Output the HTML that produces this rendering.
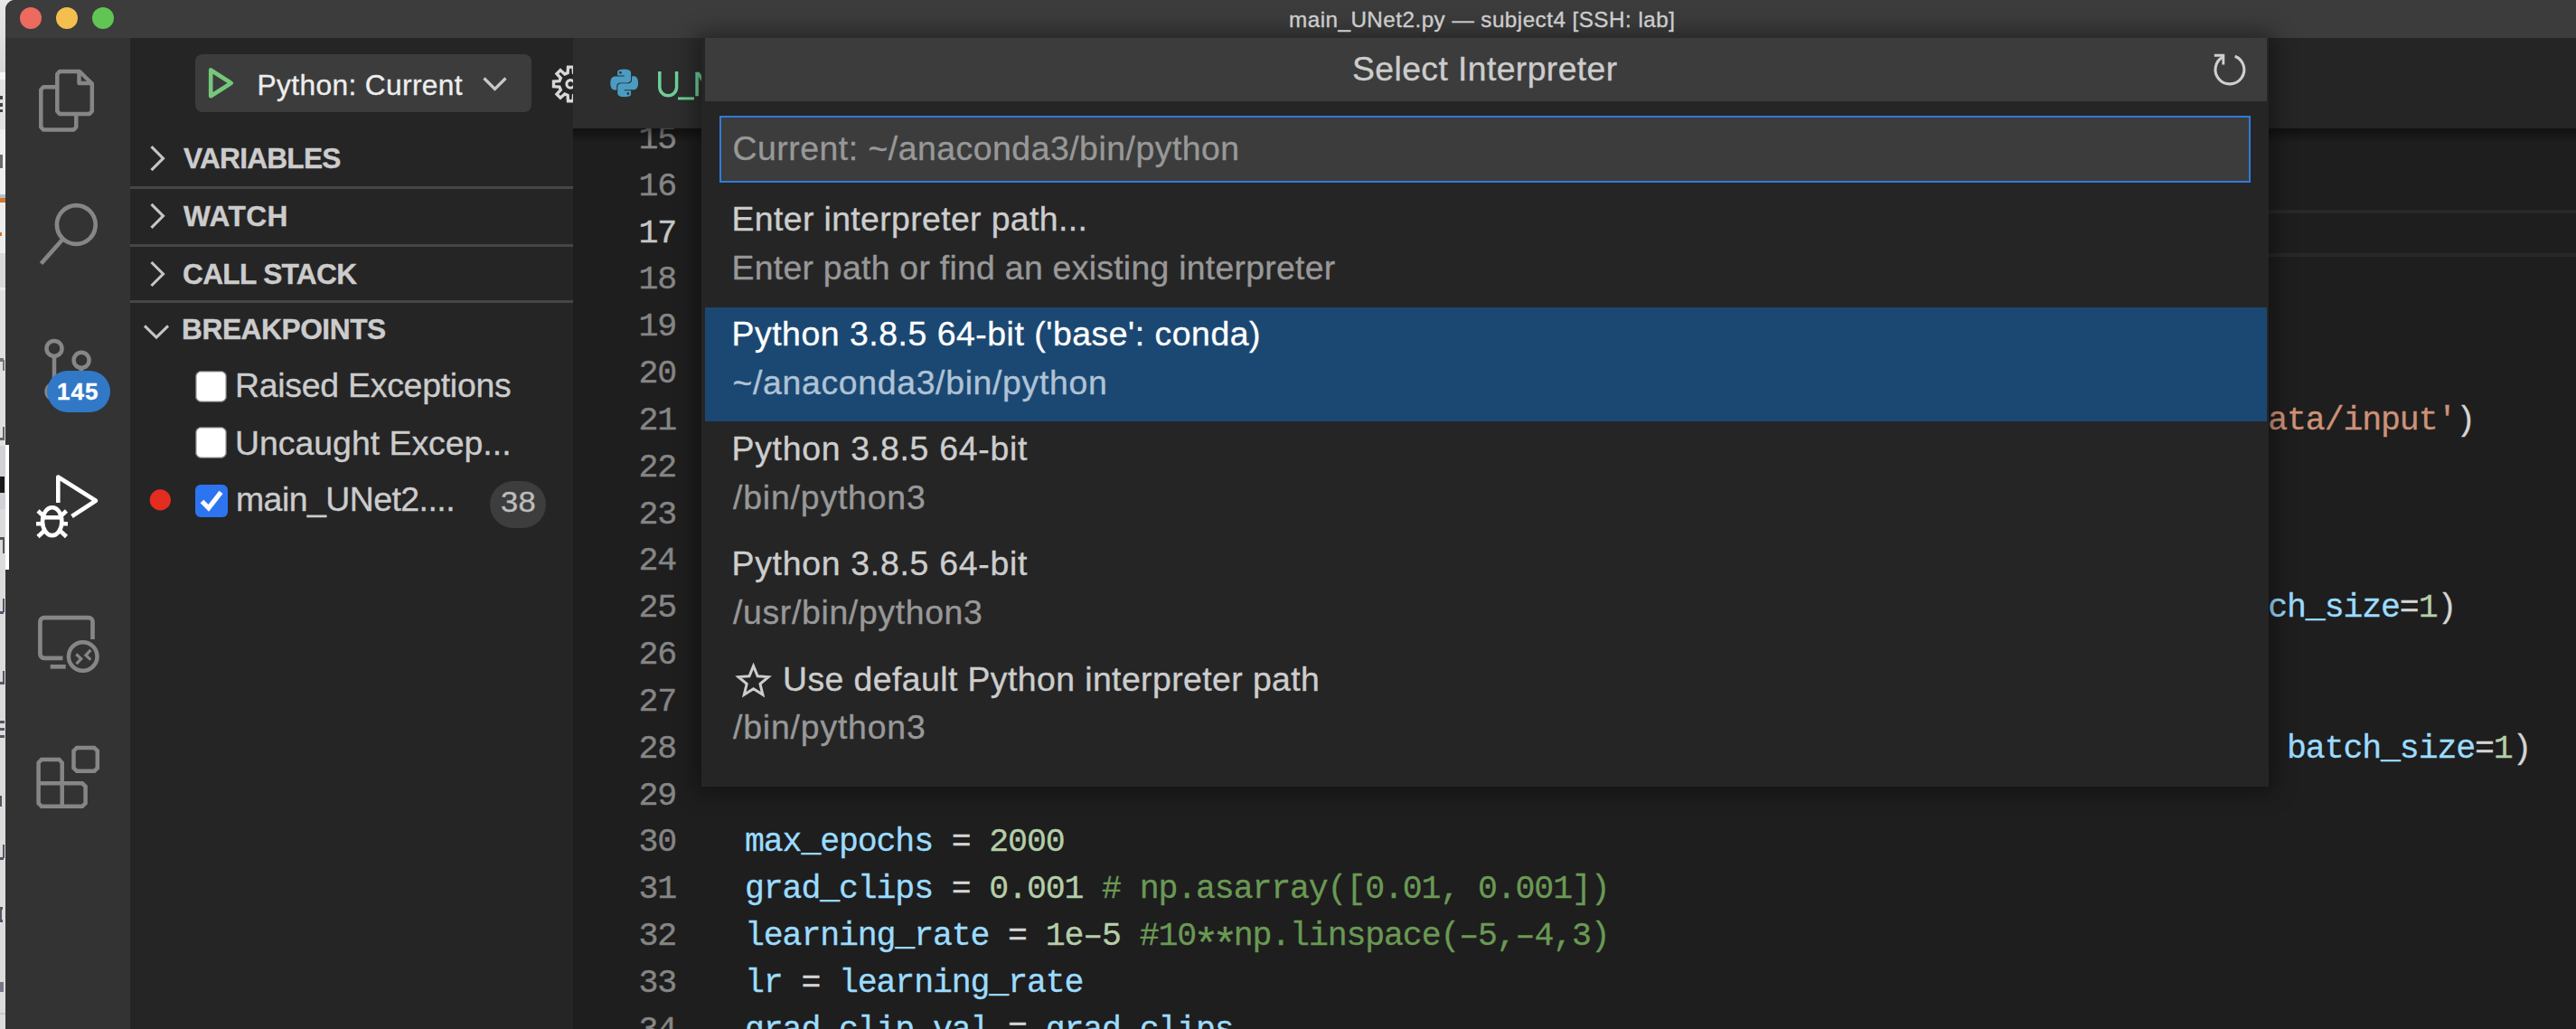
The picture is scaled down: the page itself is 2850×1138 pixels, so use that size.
<!DOCTYPE html>
<html>
<head>
<meta charset="utf-8">
<title>main_UNet2.py</title>
<style>
html,body{margin:0;padding:0;}
body{width:2850px;height:1138px;overflow:hidden;background:#e3e3e3;position:relative;font-family:"Liberation Sans",sans-serif;}
.a{position:absolute;}
#win{position:absolute;left:6px;top:0;width:2844px;height:1138px;background:#1e1e1e;border-top-left-radius:11px;overflow:hidden;}
#w{position:absolute;left:-6px;top:0;width:2850px;height:1138px;}
#titlebar{position:absolute;left:0;top:0;width:2850px;height:42px;background:#3c3c3c;}
.tl{position:absolute;top:8px;width:24px;height:24px;border-radius:50%;}
.mono{font-family:"Liberation Mono",monospace;}
.ln{position:absolute;left:634px;width:114px;text-align:right;color:#858585;font-family:"Liberation Mono",monospace;font-size:34.67px;line-height:51.84px;height:51.84px;white-space:pre;}
.cl{position:absolute;left:822.5px;color:#d4d4d4;font-family:"Liberation Mono",monospace;font-size:34.67px;line-height:51.84px;height:51.84px;white-space:pre;}
.v{color:#9cdcfe}.n{color:#b5cea8}.c{color:#6a9955}.s{color:#ce9178}
.sh{position:absolute;left:144px;width:490px;height:63.4px;}
.sh .t{position:absolute;left:59px;top:0;line-height:63.4px;font-weight:bold;font-size:31.2px;color:#c4c4c4;white-space:pre;transform-origin:0 50%;}
.sep{position:absolute;left:144px;width:490px;height:3px;background:#454545;}
.bp{position:absolute;left:262px;font-size:37.4px;color:#cccccc;line-height:63.4px;white-space:pre;transform-origin:0 50%;}
.cb{position:absolute;left:216px;width:32px;height:32px;border-radius:6px;background:#fff;border:2px solid #8a8a8a;}
.ql{position:absolute;left:811px;font-size:37.4px;line-height:54px;color:#d0d0d0;white-space:pre;transform-origin:0 50%;}
.qd{position:absolute;left:811px;font-size:37.4px;line-height:54px;color:#9d9d9d;white-space:pre;transform-origin:0 50%;}
</style>
</head>
<body>

<div class="a" style="left:0px;top:0px;width:14px;height:1138px;background:#dcdcdc;"></div>
<div class="a" style="left:0;top:0;width:14px;height:80px;background:linear-gradient(#e9e9eb,#d6d6d8);"></div>
<div class="a" style="left:0px;top:80px;width:14px;height:8px;background:#f6f6f6;"></div>
<div class="a" style="left:0px;top:88px;width:14px;height:55px;background:#e2e2e2;"></div>
<div class="a" style="left:0px;top:143px;width:14px;height:72px;background:#efefef;"></div>
<div class="a" style="left:0px;top:215px;width:14px;height:4px;background:#b9bcc4;"></div>
<div class="a" style="left:0px;top:219px;width:14px;height:5px;background:#d0762f;"></div>
<div class="a" style="left:0px;top:224px;width:14px;height:56px;background:#ededed;"></div>
<div class="a" style="left:0px;top:280px;width:14px;height:38px;background:#d9d9d9;"></div>
<div class="a" style="left:0px;top:318px;width:14px;height:3px;background:#ececec;"></div>
<div class="a" style="left:0px;top:321px;width:14px;height:172px;background:#e0e0e0;"></div>
<div class="a" style="left:0px;top:493px;width:14px;height:70px;background:#d2d2d6;"></div>
<div class="a" style="left:0px;top:106px;width:3px;height:4px;background:#444;"></div>
<div class="a" style="left:0px;top:114px;width:3px;height:4px;background:#444;"></div>
<div class="a" style="left:0px;top:121px;width:3px;height:3px;background:#444;"></div>
<div class="a" style="left:0px;top:171px;width:3px;height:15px;background:#6b6b6b;"></div>
<div class="a" style="left:0px;top:257px;width:2px;height:4px;background:#d0762f;"></div>
<div class="a" style="left:0px;top:396px;width:4px;height:4px;background:#777;"></div>
<div class="a" style="left:3px;top:398px;width:2px;height:12px;background:#777;"></div>
<div class="a" style="left:0px;top:484px;width:5px;height:3px;background:#666;"></div>
<div class="a" style="left:3px;top:472px;width:2px;height:14px;background:#666;"></div>
<div class="a" style="left:0px;top:527px;width:5px;height:18px;background:#1a1a1a;"></div>
<div class="a" style="left:0px;top:594px;width:5px;height:3px;background:#555;"></div>
<div class="a" style="left:3px;top:596px;width:2px;height:16px;background:#555;"></div>
<div class="a" style="left:0px;top:676px;width:4px;height:3px;background:#556;"></div>
<div class="a" style="left:3px;top:662px;width:2px;height:15px;background:#556;"></div>
<div class="a" style="left:0px;top:754px;width:5px;height:3px;background:#556;"></div>
<div class="a" style="left:3px;top:742px;width:2px;height:13px;background:#556;"></div>
<div class="a" style="left:0px;top:797px;width:5px;height:3px;background:#556;"></div>
<div class="a" style="left:0px;top:805px;width:5px;height:3px;background:#556;"></div>
<div class="a" style="left:0px;top:813px;width:5px;height:3px;background:#556;"></div>
<div class="a" style="left:0px;top:880px;width:2px;height:12px;background:#556;"></div>
<div class="a" style="left:0px;top:948px;width:4px;height:3px;background:#556;"></div>
<div class="a" style="left:3px;top:934px;width:2px;height:15px;background:#556;"></div>
<div class="a" style="left:0px;top:1003px;width:3px;height:3px;background:#556;"></div>
<div class="a" style="left:0px;top:1017px;width:3px;height:3px;background:#556;"></div>
<div class="a" style="left:0px;top:1006px;width:2px;height:11px;background:#556;"></div>
<div class="a" style="left:0px;top:1086px;width:4px;height:11px;background:#778;"></div>
<div class="a" style="left:0px;top:1120px;width:14px;height:2px;background:#c8c8c8;"></div>
<div id="win"><div id="w">
<div class="a" style="left:6px;top:42px;width:138px;height:1096px;background:#333333;"></div>
<div class="a" style="left:6px;top:491.5px;width:4px;height:138px;background:#ffffff;"></div>
<svg class="a" style="left:0;top:0;" width="2850" height="1138" viewBox="0 0 2850 1138" fill="none"><g stroke="#868686" stroke-width="4.5" stroke-linejoin="round" fill="none">
<path d="M63.3 82 L66 79 L88 79 L101.8 92.5 L101.8 123 L99 126 L66 126 L63.3 123 Z"/>
<path d="M87.5 79.5 L87.5 92 L101.5 92"/>
<path d="M63 96.3 L48 96.3 L45.3 99.3 L45.3 140.5 L48 143.5 L81.5 143.5 L84.3 140.5 L84.3 127"/>
</g>
<g stroke="#868686" stroke-width="4.7" fill="none">
<circle cx="84.3" cy="248.5" r="21.4"/>
<path d="M69.5 264.5 L45.5 291.5"/>
</g>
<g stroke="#868686" stroke-width="4.5" fill="none">
<circle cx="60" cy="385.4" r="8.5"/>
<circle cx="90.1" cy="398.3" r="8.5"/>
<circle cx="60" cy="433" r="8.5"/>
<path d="M60 394 L60 424.5"/>
<path d="M90.1 407 C90.1 420 75 418 62 428"/>
</g>
<g stroke="#ffffff" stroke-width="4.6" fill="none" stroke-linejoin="round">
<path d="M64.3 556 L64.3 527.5 L106 553.8 L79.5 571"/>
<ellipse cx="57.7" cy="576.7" rx="10.7" ry="15.4"/>
<path d="M47.5 572.3 L68 572.3"/>
<path d="M40 579.2 L47 579.2 M68.5 579.2 L75 579.2"/>
<path d="M42 565 L48 570.5 M73.5 565 L67.5 570.5"/>
<path d="M42 593.5 L49 587 M73.5 593.5 L66.5 587"/>
</g>
<g stroke="#868686" stroke-width="4.7" fill="none" stroke-linejoin="round">
<path d="M102.5 707 V687.7 a4.5 4.5 0 0 0 -4.5 -4.5 H48.9 a4.5 4.5 0 0 0 -4.5 4.5 V723.3 a4.5 4.5 0 0 0 4.5 4.5 H69.5"/>
<path d="M55.7 737.3 L72.7 737.3"/>
<circle cx="91.7" cy="726" r="15.8" stroke-width="4.5"/>
<path d="M84.3 723.5 L89.8 728.5 L84.5 734.2" stroke-width="3.2" stroke-linejoin="miter"/>
<path d="M100.3 718.9 L95 724.6 L100.3 729.6" stroke-width="3.2" stroke-linejoin="miter"/>
</g>
<g stroke="#868686" stroke-width="4.5" fill="none" stroke-linejoin="miter">
<path d="M42.6 843.5 L46 840 L65.5 840 L68.7 843.5 L68.7 866.3 L91 866.3 L94.6 869.8 L94.6 888.3 L91 891.8 L46 891.8 L42.6 888.3 Z"/>
<path d="M42.6 866.3 L68.7 866.3 L68.7 891.8"/>
<path d="M81.5 830.5 L85 827 L104.3 827 L107.8 830.5 L107.8 849.3 L104.3 852.8 L85 852.8 L81.5 849.3 Z"/>
</g></svg>
<div class="a" style="left:52px;top:410px;width:70px;height:46px;border-radius:23px;background:#3178c6;"></div>
<div id="badge" class="a" style="left:63.00px;top:418.67px;height:29.04px;line-height:29.04px;font-family:'Liberation Sans',sans-serif;font-size:26px;font-weight:bold;color:#ffffff;white-space:pre;letter-spacing:1.000px;-webkit-text-stroke:0.35px;">145</div>
<div class="a" style="left:144px;top:42px;width:490px;height:1096px;background:#252526;"></div>
<div class="a" style="left:216px;top:59.6px;width:372px;height:64.4px;border-radius:8px;background:#3c3c3c;"></div>
<svg class="a" style="left:0;top:0;" width="2850" height="1138" viewBox="0 0 2850 1138" fill="none"><path d="M233.2 77.5 L233.2 106.3 L255.7 91.9 Z" stroke="#75c77b" stroke-width="4.6" stroke-linejoin="round"/>
<path d="M535.5 86.5 L547.5 98.5 L559.5 86.5" stroke="#c8c8c8" stroke-width="3.2"/>
<g stroke="#d8d8d8" stroke-width="3.4" fill="none" stroke-linejoin="miter">
<path d="M650.1 90.1 L650.1 95.7 L643.7 96.1 L642.3 99.4 L646.6 104.2 L642.6 108.2 L637.8 103.9 L634.5 105.3 L634.1 111.7 L628.5 111.7 L628.1 105.3 L624.8 103.9 L620.0 108.2 L616.0 104.2 L620.3 99.4 L618.9 96.1 L612.5 95.7 L612.5 90.1 L618.9 89.7 L620.3 86.4 L616.0 81.6 L620.0 77.6 L624.8 81.9 L628.1 80.5 L628.5 74.1 L634.1 74.1 L634.5 80.5 L637.8 81.9 L642.6 77.6 L646.6 81.6 L642.3 86.4 L643.7 89.7 Z"/>
<circle cx="631.2" cy="92.9" r="4.3" stroke-width="3.1"/>
</g></svg>
<div id="pycur" class="a" style="left:284.50px;top:77.31px;height:35.41px;line-height:35.41px;font-family:'Liberation Sans',sans-serif;font-size:31.7px;font-weight:normal;color:#eeeeee;white-space:pre;letter-spacing:0.371px;-webkit-text-stroke:0.35px;">Python: Current</div>
<div id="sh0" class="a" style="left:203.00px;top:157.51px;height:35.41px;line-height:35.41px;font-family:'Liberation Sans',sans-serif;font-size:31.7px;font-weight:bold;color:#cccccc;white-space:pre;letter-spacing:-0.800px;-webkit-text-stroke:0.35px;">VARIABLES</div>
<div id="sh1" class="a" style="left:203.00px;top:221.51px;height:35.41px;line-height:35.41px;font-family:'Liberation Sans',sans-serif;font-size:31.7px;font-weight:bold;color:#cccccc;white-space:pre;letter-spacing:0.400px;-webkit-text-stroke:0.35px;">WATCH</div>
<div id="sh2" class="a" style="left:202.00px;top:285.71px;height:35.41px;line-height:35.41px;font-family:'Liberation Sans',sans-serif;font-size:31.7px;font-weight:bold;color:#cccccc;white-space:pre;letter-spacing:-0.711px;-webkit-text-stroke:0.35px;">CALL STACK</div>
<div id="sh3" class="a" style="left:201.00px;top:347.11px;height:35.41px;line-height:35.41px;font-family:'Liberation Sans',sans-serif;font-size:31.7px;font-weight:bold;color:#cccccc;white-space:pre;letter-spacing:-0.440px;-webkit-text-stroke:0.35px;">BREAKPOINTS</div>
<div class="a" style="left:144px;top:206.3px;width:490px;height:2.8px;background:#464647;"></div>
<div class="a" style="left:144px;top:270.3px;width:490px;height:2.8px;background:#464647;"></div>
<div class="a" style="left:144px;top:332.3px;width:490px;height:2.8px;background:#464647;"></div>
<svg class="a" style="left:0;top:0;" width="2850" height="1138" viewBox="0 0 2850 1138" fill="none"><path d="M167.5 162.2 L180.5 175.2 L167.5 188.2" stroke="#c5c5c5" stroke-width="3.1" fill="none"/><path d="M167.5 225.8 L180.5 238.8 L167.5 251.8" stroke="#c5c5c5" stroke-width="3.1" fill="none"/><path d="M167.5 290 L180.5 303 L167.5 316" stroke="#c5c5c5" stroke-width="3.1" fill="none"/><path d="M160 360.3 L173 373 L186 360.3" stroke="#c5c5c5" stroke-width="3.1" fill="none"/></svg>
<div class="a" style="left:216.4px;top:410px;width:32.6px;height:32.8px;border-radius:6.5px;background:#ffffff;border:1.5px solid #6f6f6f;box-shadow:inset 0 0 0 0.6px #9a9a9a;"></div>
<div class="a" style="left:216.4px;top:472px;width:32.6px;height:32.8px;border-radius:6.5px;background:#ffffff;border:1.5px solid #6f6f6f;box-shadow:inset 0 0 0 0.6px #9a9a9a;"></div>
<div class="a" style="left:216.4px;top:536px;width:35.6px;height:35.6px;border-radius:6px;background:#2d74f0;"></div>
<svg class="a" style="left:0;top:0;" width="2850" height="1138" viewBox="0 0 2850 1138" fill="none"><path d="M223.5 554.5 L230.8 561.8 L244.5 544.3" stroke="#ffffff" stroke-width="5.2" fill="none"/><circle cx="177.3" cy="552.9" r="11.6" fill="#e42d20"/></svg>
<div id="bp0" class="a" style="left:260.00px;top:405.75px;height:41.78px;line-height:41.78px;font-family:'Liberation Sans',sans-serif;font-size:37.4px;font-weight:normal;color:#cccccc;white-space:pre;letter-spacing:-0.250px;-webkit-text-stroke:0.35px;">Raised Exceptions</div>
<div id="bp1" class="a" style="left:260.00px;top:469.65px;height:41.78px;line-height:41.78px;font-family:'Liberation Sans',sans-serif;font-size:37.4px;font-weight:normal;color:#cccccc;white-space:pre;letter-spacing:0.000px;-webkit-text-stroke:0.35px;">Uncaught Excep...</div>
<div id="bp2" class="a" style="left:261.00px;top:531.65px;height:41.78px;line-height:41.78px;font-family:'Liberation Sans',sans-serif;font-size:37.4px;font-weight:normal;color:#cccccc;white-space:pre;letter-spacing:-0.523px;-webkit-text-stroke:0.35px;">main_UNet2....</div>
<div class="a" style="left:542px;top:531.8px;width:62.2px;height:52.1px;border-radius:26px;background:#3d3d3d;"></div>
<div id="b38" class="a" style="left:553.60px;top:537.81px;height:35.41px;line-height:35.41px;font-family:'Liberation Sans',sans-serif;font-size:31.7px;font-weight:normal;color:#bdbdbd;white-space:pre;letter-spacing:0.200px;transform:scaleX(1.09);transform-origin:0 0;-webkit-text-stroke:0.35px;">38</div>
<div class="a" style="left:634px;top:42px;width:2216px;height:1096px;background:#1e1e1e;"></div>
<div class="a" style="left:822px;top:231.8px;width:2028px;height:4.4px;background:#282828;"></div>
<div class="a" style="left:822px;top:279.8px;width:2028px;height:4.4px;background:#282828;"></div>
<div id="ln15" class="a" style="left:706.50px;top:133.83px;height:41.47px;line-height:41.47px;font-family:'Liberation Mono',monospace;font-size:36.6px;font-weight:normal;color:#858585;white-space:pre;letter-spacing:0.000px;letter-spacing:-1.157px;-webkit-text-stroke:0.4px #858585;">15</div>
<div id="ln16" class="a" style="left:706.50px;top:185.67px;height:41.47px;line-height:41.47px;font-family:'Liberation Mono',monospace;font-size:36.6px;font-weight:normal;color:#858585;white-space:pre;letter-spacing:0.000px;letter-spacing:-1.157px;-webkit-text-stroke:0.4px #858585;">16</div>
<div id="ln17" class="a" style="left:706.50px;top:237.51px;height:41.47px;line-height:41.47px;font-family:'Liberation Mono',monospace;font-size:36.6px;font-weight:normal;color:#c6c6c6;white-space:pre;letter-spacing:0.000px;letter-spacing:-1.157px;-webkit-text-stroke:0.4px #c6c6c6;">17</div>
<div id="ln18" class="a" style="left:706.50px;top:289.35px;height:41.47px;line-height:41.47px;font-family:'Liberation Mono',monospace;font-size:36.6px;font-weight:normal;color:#858585;white-space:pre;letter-spacing:0.000px;letter-spacing:-1.157px;-webkit-text-stroke:0.4px #858585;">18</div>
<div id="ln19" class="a" style="left:706.50px;top:341.19px;height:41.47px;line-height:41.47px;font-family:'Liberation Mono',monospace;font-size:36.6px;font-weight:normal;color:#858585;white-space:pre;letter-spacing:0.000px;letter-spacing:-1.157px;-webkit-text-stroke:0.4px #858585;">19</div>
<div id="ln20" class="a" style="left:706.50px;top:393.03px;height:41.47px;line-height:41.47px;font-family:'Liberation Mono',monospace;font-size:36.6px;font-weight:normal;color:#858585;white-space:pre;letter-spacing:0.000px;letter-spacing:-1.157px;-webkit-text-stroke:0.4px #858585;">20</div>
<div id="ln21" class="a" style="left:706.50px;top:444.87px;height:41.47px;line-height:41.47px;font-family:'Liberation Mono',monospace;font-size:36.6px;font-weight:normal;color:#858585;white-space:pre;letter-spacing:0.000px;letter-spacing:-1.157px;-webkit-text-stroke:0.4px #858585;">21</div>
<div id="ln22" class="a" style="left:706.50px;top:496.71px;height:41.47px;line-height:41.47px;font-family:'Liberation Mono',monospace;font-size:36.6px;font-weight:normal;color:#858585;white-space:pre;letter-spacing:0.000px;letter-spacing:-1.157px;-webkit-text-stroke:0.4px #858585;">22</div>
<div id="ln23" class="a" style="left:706.50px;top:548.55px;height:41.47px;line-height:41.47px;font-family:'Liberation Mono',monospace;font-size:36.6px;font-weight:normal;color:#858585;white-space:pre;letter-spacing:0.000px;letter-spacing:-1.157px;-webkit-text-stroke:0.4px #858585;">23</div>
<div id="ln24" class="a" style="left:706.50px;top:600.39px;height:41.47px;line-height:41.47px;font-family:'Liberation Mono',monospace;font-size:36.6px;font-weight:normal;color:#858585;white-space:pre;letter-spacing:0.000px;letter-spacing:-1.157px;-webkit-text-stroke:0.4px #858585;">24</div>
<div id="ln25" class="a" style="left:706.50px;top:652.23px;height:41.47px;line-height:41.47px;font-family:'Liberation Mono',monospace;font-size:36.6px;font-weight:normal;color:#858585;white-space:pre;letter-spacing:0.000px;letter-spacing:-1.157px;-webkit-text-stroke:0.4px #858585;">25</div>
<div id="ln26" class="a" style="left:706.50px;top:704.07px;height:41.47px;line-height:41.47px;font-family:'Liberation Mono',monospace;font-size:36.6px;font-weight:normal;color:#858585;white-space:pre;letter-spacing:0.000px;letter-spacing:-1.157px;-webkit-text-stroke:0.4px #858585;">26</div>
<div id="ln27" class="a" style="left:706.50px;top:755.91px;height:41.47px;line-height:41.47px;font-family:'Liberation Mono',monospace;font-size:36.6px;font-weight:normal;color:#858585;white-space:pre;letter-spacing:0.000px;letter-spacing:-1.157px;-webkit-text-stroke:0.4px #858585;">27</div>
<div id="ln28" class="a" style="left:706.50px;top:807.75px;height:41.47px;line-height:41.47px;font-family:'Liberation Mono',monospace;font-size:36.6px;font-weight:normal;color:#858585;white-space:pre;letter-spacing:0.000px;letter-spacing:-1.157px;-webkit-text-stroke:0.4px #858585;">28</div>
<div id="ln29" class="a" style="left:706.50px;top:859.59px;height:41.47px;line-height:41.47px;font-family:'Liberation Mono',monospace;font-size:36.6px;font-weight:normal;color:#858585;white-space:pre;letter-spacing:0.000px;letter-spacing:-1.157px;-webkit-text-stroke:0.4px #858585;">29</div>
<div id="ln30" class="a" style="left:706.50px;top:911.43px;height:41.47px;line-height:41.47px;font-family:'Liberation Mono',monospace;font-size:36.6px;font-weight:normal;color:#858585;white-space:pre;letter-spacing:0.000px;letter-spacing:-1.157px;-webkit-text-stroke:0.4px #858585;">30</div>
<div id="ln31" class="a" style="left:706.50px;top:963.27px;height:41.47px;line-height:41.47px;font-family:'Liberation Mono',monospace;font-size:36.6px;font-weight:normal;color:#858585;white-space:pre;letter-spacing:0.000px;letter-spacing:-1.157px;-webkit-text-stroke:0.4px #858585;">31</div>
<div id="ln32" class="a" style="left:706.50px;top:1015.11px;height:41.47px;line-height:41.47px;font-family:'Liberation Mono',monospace;font-size:36.6px;font-weight:normal;color:#858585;white-space:pre;letter-spacing:0.000px;letter-spacing:-1.157px;-webkit-text-stroke:0.4px #858585;">32</div>
<div id="ln33" class="a" style="left:706.50px;top:1066.95px;height:41.47px;line-height:41.47px;font-family:'Liberation Mono',monospace;font-size:36.6px;font-weight:normal;color:#858585;white-space:pre;letter-spacing:0.000px;letter-spacing:-1.157px;-webkit-text-stroke:0.4px #858585;">33</div>
<div id="ln34" class="a" style="left:706.50px;top:1118.79px;height:41.47px;line-height:41.47px;font-family:'Liberation Mono',monospace;font-size:36.6px;font-weight:normal;color:#858585;white-space:pre;letter-spacing:0.000px;letter-spacing:-1.157px;-webkit-text-stroke:0.4px #858585;">34</div>
<div id="c21" class="a" style="left:2509.29px;top:444.87px;height:41.47px;line-height:41.47px;font-family:'Liberation Mono',monospace;font-size:36.6px;font-weight:normal;color:#d4d4d4;white-space:pre;letter-spacing:0.000px;letter-spacing:-1.157px;-webkit-text-stroke:0.3px;"><span class="s">ata/input'</span>)</div>
<div id="c25" class="a" style="left:2509.29px;top:652.23px;height:41.47px;line-height:41.47px;font-family:'Liberation Mono',monospace;font-size:36.6px;font-weight:normal;color:#d4d4d4;white-space:pre;letter-spacing:0.000px;letter-spacing:-1.157px;-webkit-text-stroke:0.3px;"><span class="v">ch_size</span>=<span class="n">1</span>)</div>
<div id="c28" class="a" style="left:2530.09px;top:807.75px;height:41.47px;line-height:41.47px;font-family:'Liberation Mono',monospace;font-size:36.6px;font-weight:normal;color:#d4d4d4;white-space:pre;letter-spacing:0.000px;letter-spacing:-1.157px;-webkit-text-stroke:0.3px;"><span class="v">batch_size</span>=<span class="n">1</span>)</div>
<div id="c30" class="a" style="left:824.00px;top:911.43px;height:41.47px;line-height:41.47px;font-family:'Liberation Mono',monospace;font-size:36.6px;font-weight:normal;color:#d4d4d4;white-space:pre;letter-spacing:0.000px;letter-spacing:-1.157px;-webkit-text-stroke:0.3px;"><span class="v">max_epochs</span> = <span class="n">2000</span></div>
<div id="c31" class="a" style="left:824.00px;top:963.27px;height:41.47px;line-height:41.47px;font-family:'Liberation Mono',monospace;font-size:36.6px;font-weight:normal;color:#d4d4d4;white-space:pre;letter-spacing:0.000px;letter-spacing:-1.157px;-webkit-text-stroke:0.3px;"><span class="v">grad_clips</span> = <span class="n">0.001</span> <span class="c"># np.asarray([0.01, 0.001])</span></div>
<div id="c32" class="a" style="left:824.00px;top:1015.11px;height:41.47px;line-height:41.47px;font-family:'Liberation Mono',monospace;font-size:36.6px;font-weight:normal;color:#d4d4d4;white-space:pre;letter-spacing:0.000px;letter-spacing:-1.157px;-webkit-text-stroke:0.3px;"><span class="v">learning_rate</span> = <span class="n">1e–5</span> <span class="c">#10<span style="position:relative;top:15px;left:-3px;font-size:48px;line-height:0;letter-spacing:-8px;margin-right:0px;">**</span>np.linspace(–5,–4,3)</span></div>
<div id="c33" class="a" style="left:824.00px;top:1066.95px;height:41.47px;line-height:41.47px;font-family:'Liberation Mono',monospace;font-size:36.6px;font-weight:normal;color:#d4d4d4;white-space:pre;letter-spacing:0.000px;letter-spacing:-1.157px;-webkit-text-stroke:0.3px;"><span class="v">lr</span> = <span class="v">learning_rate</span></div>
<div id="c34" class="a" style="left:824.00px;top:1118.79px;height:41.47px;line-height:41.47px;font-family:'Liberation Mono',monospace;font-size:36.6px;font-weight:normal;color:#d4d4d4;white-space:pre;letter-spacing:0.000px;letter-spacing:-1.157px;-webkit-text-stroke:0.3px;"><span class="v">grad_clip_val</span> = <span class="v">grad_clips</span></div>
<div class="a" style="left:634px;top:42px;width:2216px;height:100px;background:#252526;"></div>
<div class="a" style="left:634px;top:42px;width:160px;height:100px;background:#2d2d2d;"></div>
<div class="a" style="left:634px;top:142px;width:2216px;height:16px;background:linear-gradient(rgba(0,0,0,0.45),rgba(0,0,0,0));"></div>
<svg class="a" style="left:0;top:0;" width="2850" height="1138" viewBox="0 0 2850 1138" fill="none"><path d="M729.8 79 L729.8 96.3 A9.4 9.4 0 0 0 748.6 96.3 L748.6 79" stroke="#6fcf97" stroke-width="3.5" fill="none"/><rect x="750" y="107.4" width="18" height="3" fill="#6fcf97"/></svg>
<div id="tab" class="a" style="left:766.60px;top:72.95px;height:41.78px;line-height:41.78px;font-family:'Liberation Sans',sans-serif;font-size:37.4px;font-weight:normal;color:#6fcf97;white-space:pre;letter-spacing:0.000px;-webkit-text-stroke:0.35px;">Net.py</div>
<svg class="a" style="left:0;top:0;" width="2850" height="1138" viewBox="0 0 2850 1138" fill="none"><path transform="translate(675.4,76.6) scale(1.272)" fill="#4b9cc3" fill-rule="evenodd" d="M14.25.18l.9.2.73.26.59.3.45.32.34.34.25.34.16.33.1.3.04.26.02.2-.01.13V8.5l-.05.63-.13.55-.21.46-.26.38-.3.31-.33.25-.35.19-.35.14-.33.1-.3.07-.26.04-.21.02H8.77l-.69.05-.59.14-.5.22-.41.27-.33.32-.27.35-.2.36-.15.37-.1.35-.07.32-.04.27-.02.21v3.06H3.17l-.21-.03-.28-.07-.32-.12-.35-.18-.36-.26-.36-.36-.35-.46-.32-.59-.28-.73-.21-.88-.14-1.05-.05-1.23.06-1.22.16-1.04.24-.87.32-.71.36-.57.4-.44.42-.33.42-.24.4-.16.36-.1.32-.05.24-.01h.16l.06.01h8.16v-.83H6.18l-.01-2.75-.02-.37.05-.34.11-.31.17-.28.25-.26.31-.23.38-.2.44-.18.51-.15.58-.12.64-.1.71-.06.77-.04.84-.02 1.27.05zm-6.3 1.98l-.23.33-.08.41.08.41.23.34.33.22.41.09.41-.09.33-.22.23-.34.08-.41-.08-.41-.23-.33-.33-.22-.41-.09-.41.09zm13.09 3.95l.28.06.32.12.35.18.36.27.36.35.35.47.32.59.28.73.21.88.14 1.04.05 1.23-.06 1.23-.16 1.04-.24.86-.32.71-.36.57-.4.45-.42.33-.42.24-.4.16-.36.09-.32.05-.24.02-.16-.01h-8.22v.82h5.84l.01 2.76.02.36-.05.34-.11.31-.17.29-.25.25-.31.24-.38.2-.44.17-.51.15-.58.13-.64.09-.71.07-.77.04-.84.01-1.27-.04-1.07-.14-.9-.2-.73-.25-.59-.3-.45-.33-.34-.34-.25-.34-.16-.33-.1-.3-.04-.25-.02-.2.01-.13v-5.34l.05-.64.13-.54.21-.46.26-.38.3-.32.33-.24.35-.2.35-.14.33-.1.3-.06.26-.04.21-.02.13-.01h5.84l.69-.05.59-.14.5-.21.41-.28.33-.32.27-.35.2-.36.15-.36.1-.35.07-.32.04-.28.02-.21V6.07h2.09l.14.01zm-6.47 14.25l-.23.33-.08.41.08.41.23.33.33.23.41.08.41-.08.33-.23.23-.33.08-.41-.08-.41-.23-.33-.33-.23-.41-.08-.41.08z"/></svg>
<div id="titlebar"></div>
<div class="a" style="left:776px;top:42px;width:1734px;height:828px;background:#252526;box-shadow:0 0 23px 5.8px rgba(0,0,0,0.40);"></div>
<div class="a" style="left:780px;top:42px;width:1728px;height:70px;background:#3c3c3c;"></div>
<div id="qt" class="a" style="left:1496.00px;top:56.45px;height:41.78px;line-height:41.78px;font-family:'Liberation Sans',sans-serif;font-size:37.4px;font-weight:normal;color:#cccccc;white-space:pre;letter-spacing:0.376px;-webkit-text-stroke:0.35px;">Select Interpreter</div>
<svg class="a" style="left:0;top:0;" width="2850" height="1138" viewBox="0 0 2850 1138" fill="none"><path d="M2472.7 62.2 A15.9 15.9 0 1 1 2459.6 62.9" stroke="#cfcfcf" stroke-width="3.1" fill="none"/><path d="M2449.8 61.3 L2459.8 61.3 L2459.8 71.4" stroke="#cfcfcf" stroke-width="2.9" fill="none"/></svg>
<div class="a" style="left:796px;top:128px;width:1690px;height:70px;background:#3c3c3c;border:2px solid #2f7bd8;"></div>
<div id="qi" class="a" style="left:810.50px;top:144.15px;height:41.78px;line-height:41.78px;font-family:'Liberation Sans',sans-serif;font-size:37.4px;font-weight:normal;color:#989898;white-space:pre;letter-spacing:0.500px;-webkit-text-stroke:0.35px;">Current: ~/anaconda3/bin/python</div>
<div class="a" style="left:780px;top:339.8px;width:1728px;height:126.4px;background:#1b4872;"></div>
<div id="ql0" class="a" style="left:809.50px;top:222.15px;height:41.78px;line-height:41.78px;font-family:'Liberation Sans',sans-serif;font-size:37.4px;font-weight:normal;color:#cdcdcd;white-space:pre;letter-spacing:0.367px;-webkit-text-stroke:0.35px;">Enter interpreter path...</div>
<div id="qd0" class="a" style="left:809.50px;top:275.75px;height:41.78px;line-height:41.78px;font-family:'Liberation Sans',sans-serif;font-size:37.4px;font-weight:normal;color:#989898;white-space:pre;letter-spacing:0.268px;-webkit-text-stroke:0.35px;">Enter path or find an existing interpreter</div>
<div id="ql1" class="a" style="left:809.50px;top:349.25px;height:41.78px;line-height:41.78px;font-family:'Liberation Sans',sans-serif;font-size:37.4px;font-weight:normal;color:#ffffff;white-space:pre;letter-spacing:0.524px;-webkit-text-stroke:0.35px;">Python 3.8.5 64-bit ('base': conda)</div>
<div id="qd1" class="a" style="left:810.50px;top:402.85px;height:41.78px;line-height:41.78px;font-family:'Liberation Sans',sans-serif;font-size:37.4px;font-weight:normal;color:#afc3d6;white-space:pre;letter-spacing:0.667px;-webkit-text-stroke:0.35px;">~/anaconda3/bin/python</div>
<div id="ql2" class="a" style="left:809.50px;top:476.35px;height:41.78px;line-height:41.78px;font-family:'Liberation Sans',sans-serif;font-size:37.4px;font-weight:normal;color:#cdcdcd;white-space:pre;letter-spacing:0.722px;-webkit-text-stroke:0.35px;">Python 3.8.5 64-bit</div>
<div id="qd2" class="a" style="left:811.00px;top:529.95px;height:41.78px;line-height:41.78px;font-family:'Liberation Sans',sans-serif;font-size:37.4px;font-weight:normal;color:#989898;white-space:pre;letter-spacing:0.818px;-webkit-text-stroke:0.35px;">/bin/python3</div>
<div id="ql3" class="a" style="left:809.50px;top:603.45px;height:41.78px;line-height:41.78px;font-family:'Liberation Sans',sans-serif;font-size:37.4px;font-weight:normal;color:#cdcdcd;white-space:pre;letter-spacing:0.722px;-webkit-text-stroke:0.35px;">Python 3.8.5 64-bit</div>
<div id="qd3" class="a" style="left:811.00px;top:657.05px;height:41.78px;line-height:41.78px;font-family:'Liberation Sans',sans-serif;font-size:37.4px;font-weight:normal;color:#989898;white-space:pre;letter-spacing:0.653px;-webkit-text-stroke:0.35px;">/usr/bin/python3</div>
<div id="ql4" class="a" style="left:866.00px;top:730.55px;height:41.78px;line-height:41.78px;font-family:'Liberation Sans',sans-serif;font-size:37.4px;font-weight:normal;color:#cdcdcd;white-space:pre;letter-spacing:0.412px;-webkit-text-stroke:0.35px;">Use default Python interpreter path</div>
<div id="qd4" class="a" style="left:811.00px;top:784.15px;height:41.78px;line-height:41.78px;font-family:'Liberation Sans',sans-serif;font-size:37.4px;font-weight:normal;color:#989898;white-space:pre;letter-spacing:0.818px;-webkit-text-stroke:0.35px;">/bin/python3</div>
<svg class="a" style="left:0;top:0;" width="2850" height="1138" viewBox="0 0 2850 1138" fill="none"><polygon points="833.6,736.5 838.2,747.7 850.2,748.6 841.0,756.4 843.9,768.2 833.6,761.8 823.3,768.2 826.2,756.4 817.0,748.6 829.0,747.7" stroke="#cdcdcd" stroke-width="3" fill="none" stroke-linejoin="miter"/></svg>
<div class="a" style="left:22px;top:8px;width:24px;height:24px;border-radius:50%;background:#ec6a5e;"></div>
<div class="a" style="left:62px;top:8px;width:24px;height:24px;border-radius:50%;background:#f4bf4f;"></div>
<div class="a" style="left:102px;top:8px;width:24px;height:24px;border-radius:50%;background:#61c554;"></div>
<div id="title" class="a" style="left:1426.00px;top:8.21px;height:27.14px;line-height:27.14px;font-family:'Liberation Sans',sans-serif;font-size:24.3px;font-weight:normal;color:#cccccc;white-space:pre;letter-spacing:0.441px;-webkit-text-stroke:0.35px;">main_UNet2.py — subject4 [SSH: lab]</div>
</div></div>
</body>
</html>
